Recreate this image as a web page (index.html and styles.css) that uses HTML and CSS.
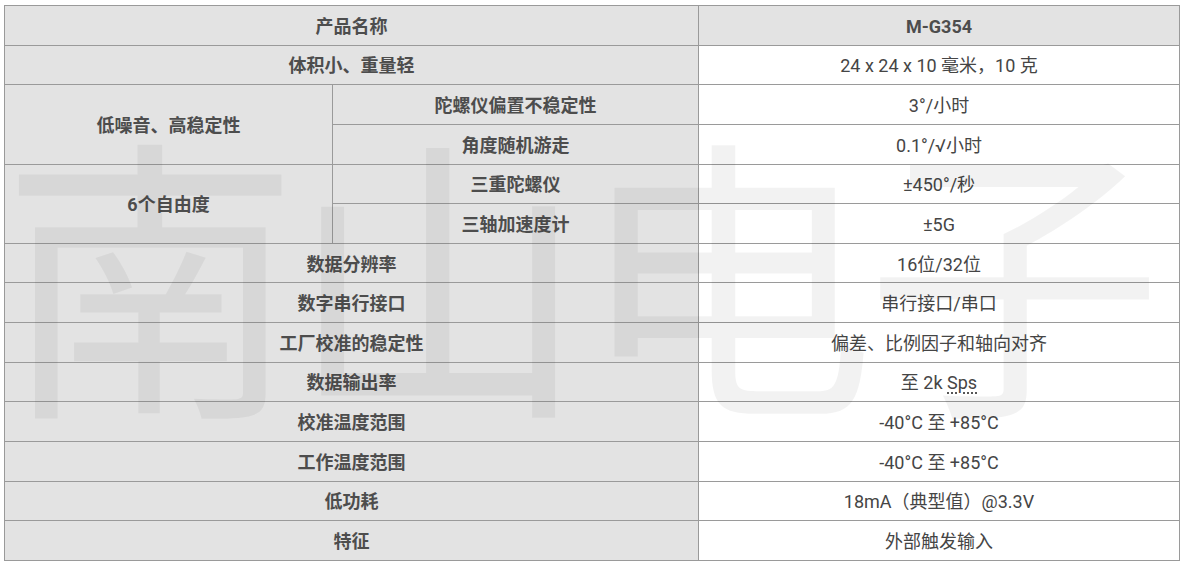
FILE: index.html
```html
<!DOCTYPE html>
<html lang="zh-CN">
<head>
<meta charset="utf-8">
<title>M-G354</title>
<link rel="stylesheet" href="styles.css">
</head>
<body>
<div class="spec-wrap">
  <table class="spec">
    <colgroup>
      <col class="c1">
      <col class="c2">
      <col class="c3">
    </colgroup>
    <tr class="head">
      <th colspan="2">产品名称</th>
      <th>M-G354</th>
    </tr>
    <tr>
      <th colspan="2">体积小、重量轻</th>
      <td>24 x 24 x 10 毫米，10 克</td>
    </tr>
    <tr>
      <th rowspan="2">低噪音、高稳定性</th>
      <th>陀螺仪偏置不稳定性</th>
      <td>3°/小时</td>
    </tr>
    <tr>
      <th>角度随机游走</th>
      <td>0.1°/√小时</td>
    </tr>
    <tr>
      <th rowspan="2">6个自由度</th>
      <th>三重陀螺仪</th>
      <td>±450°/秒</td>
    </tr>
    <tr>
      <th>三轴加速度计</th>
      <td>±5G</td>
    </tr>
    <tr>
      <th colspan="2">数据分辨率</th>
      <td>16位/32位</td>
    </tr>
    <tr>
      <th colspan="2">数字串行接口</th>
      <td>串行接口/串口</td>
    </tr>
    <tr>
      <th colspan="2">工厂校准的稳定性</th>
      <td>偏差、比例因子和轴向对齐</td>
    </tr>
    <tr>
      <th colspan="2">数据输出率</th>
      <td>至 2k <abbr title="Samples per second">Sps</abbr></td>
    </tr>
    <tr>
      <th colspan="2">校准温度范围</th>
      <td>-40°C 至 +85°C</td>
    </tr>
    <tr>
      <th colspan="2">工作温度范围</th>
      <td>-40°C 至 +85°C</td>
    </tr>
    <tr>
      <th colspan="2">低功耗</th>
      <td>18mA（典型值）@3.3V</td>
    </tr>
    <tr>
      <th colspan="2">特征</th>
      <td>外部触发输入</td>
    </tr>
  </table>
  <div class="watermark" aria-hidden="true">南山电子</div>
</div>
</body>
</html>
```
FILE: styles.css
```css
html, body {
  margin: 0;
  padding: 0;
  background: #ffffff;
}

body {
  font-family: Roboto, "Noto Sans CJK SC", sans-serif;
}

.spec-wrap {
  position: relative;
  padding: 5px 0 0 4px;
  width: 1175px;
}

.spec {
  border-collapse: collapse;
  table-layout: fixed;
  width: 1175px;
  font-size: 18px;
}

.c1 { width: 328px; }
.c2 { width: 366px; }
.c3 { width: 481px; }

.spec tr {
  height: 39.64px;
}

.spec th,
.spec td {
  border: 1px solid #9a9a9a;
  padding: 3px 8px 0;
  text-align: center;
  vertical-align: middle;
  line-height: 26px;
}

.spec th {
  background: #e3e3e3;
  color: #4d4d4d;
  font-weight: 700;
}

.spec td {
  background: #ffffff;
  color: #454545;
  font-weight: 400;
}

.spec abbr {
  text-decoration: underline dotted;
  text-underline-offset: 3px;
}

.watermark {
  position: absolute;
  left: 1px;
  top: 116px;
  font-family: "Noto Sans CJK SC", sans-serif;
  font-size: 298px;
  line-height: 1;
  letter-spacing: -10px;
  font-weight: 400;
  color: rgba(0, 0, 0, 0.05);
  white-space: nowrap;
  pointer-events: none;
}
```
